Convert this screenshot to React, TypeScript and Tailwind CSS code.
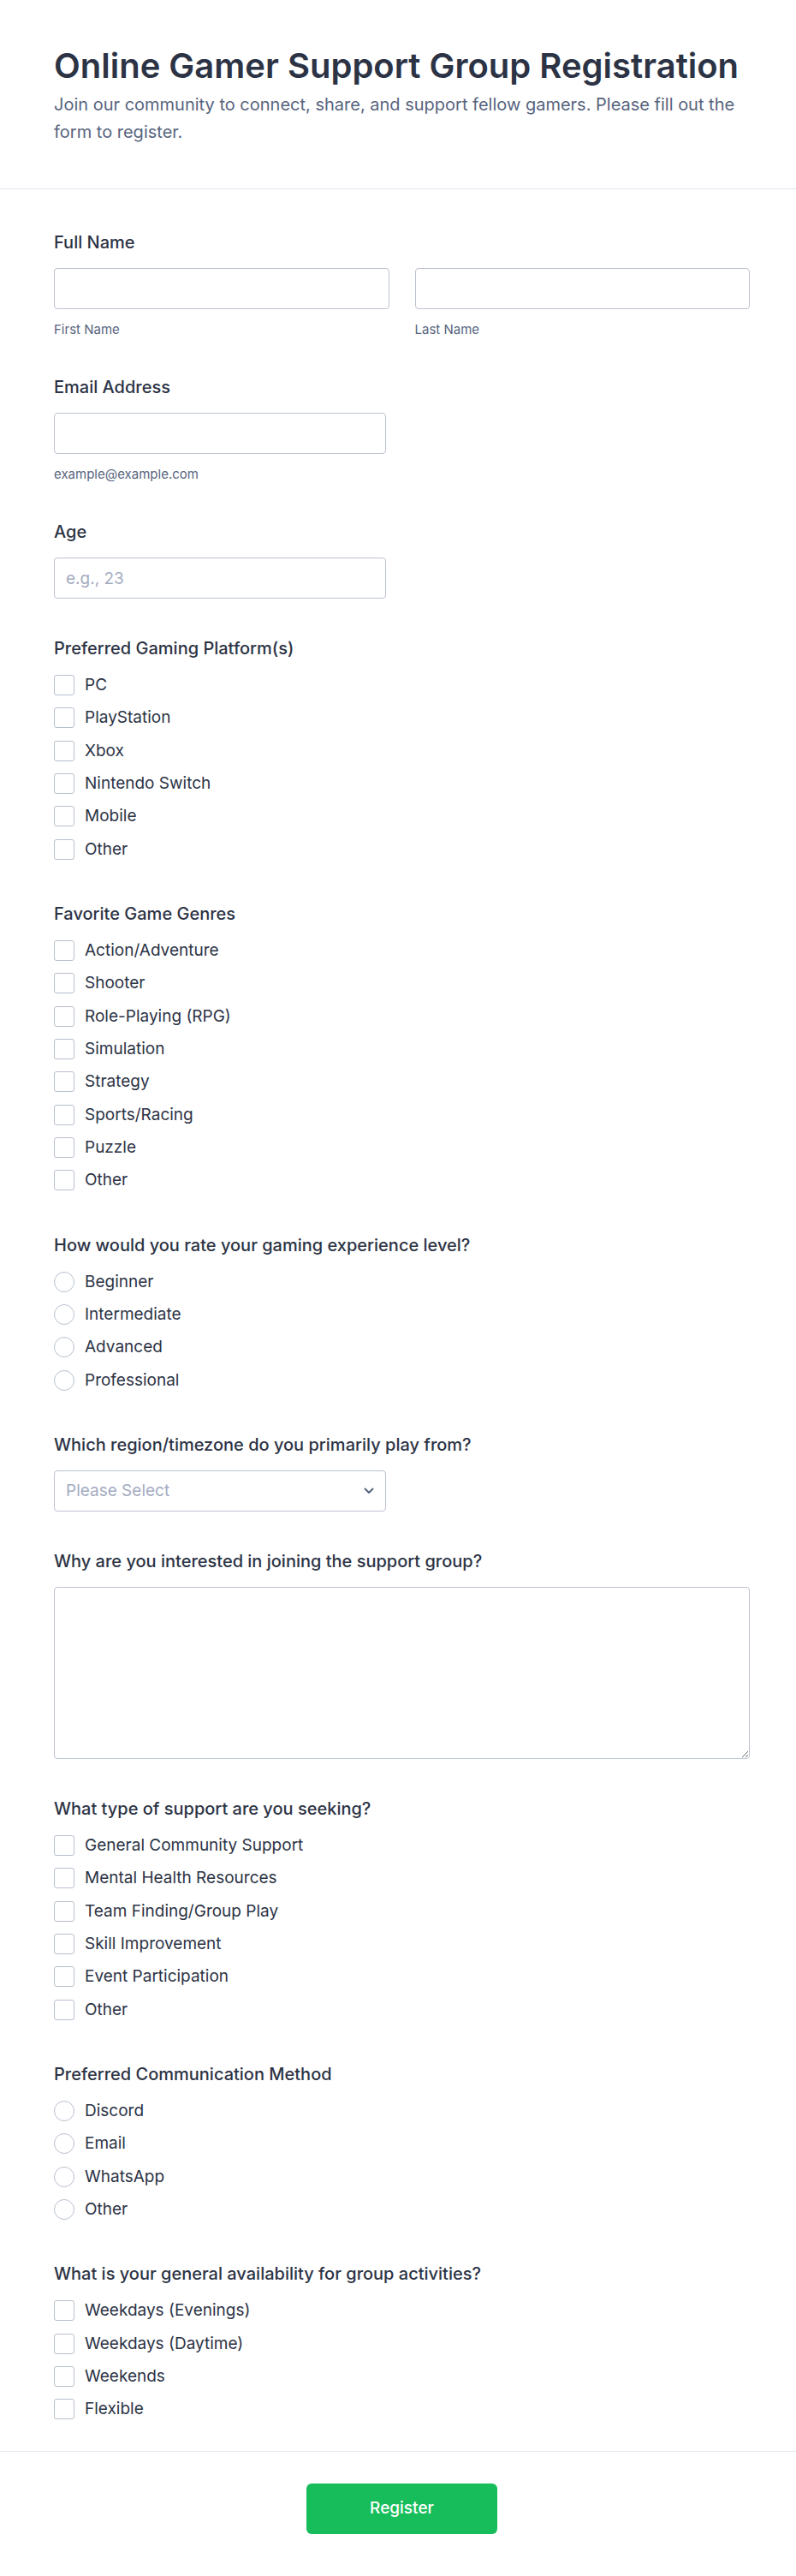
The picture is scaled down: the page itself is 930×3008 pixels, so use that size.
import React from 'react';

const PLATFORMS = ['PC', 'PlayStation', 'Xbox', 'Nintendo Switch', 'Mobile', 'Other'];
const GENRES = [
  'Action/Adventure',
  'Shooter',
  'Role-Playing (RPG)',
  'Simulation',
  'Strategy',
  'Sports/Racing',
  'Puzzle',
  'Other',
];
const LEVELS = ['Beginner', 'Intermediate', 'Advanced', 'Professional'];
const SUPPORT = [
  'General Community Support',
  'Mental Health Resources',
  'Team Finding/Group Play',
  'Skill Improvement',
  'Event Participation',
  'Other',
];
const METHODS = ['Discord', 'Email', 'WhatsApp', 'Other'];
const AVAILABILITY = ['Weekdays (Evenings)', 'Weekdays (Daytime)', 'Weekends', 'Flexible'];

const Label: React.FC<{ children: React.ReactNode }> = ({ children }) => (
  <div className="text-[20px] leading-[28px] font-medium text-[#2c3345]">{children}</div>
);

const TextInput: React.FC<{ placeholder?: string; className?: string }> = ({ placeholder, className = '' }) => (
  <input
    type="text"
    placeholder={placeholder}
    className={`block h-[48px] px-[13px] rounded-[4px] border border-[#bcc2d1] bg-white text-[19px] text-[#2c3345] placeholder:text-[#a3abbf] outline-none ${className}`}
  />
);

const OptionGroup: React.FC<{ name: string; label: string; options: string[]; type: 'checkbox' | 'radio' }> = ({
  name,
  label,
  options,
  type,
}) => (
  <div>
    <Label>{label}</Label>
    <div className="mt-[10px] flex flex-col">
      {options.map((opt) => (
        <label key={opt} className="flex items-center h-[38.33px] cursor-pointer">
          <input
            type={type}
            name={name}
            className={`appearance-none w-6 h-6 shrink-0 border border-[#b8bfce] bg-white ${
              type === 'radio' ? 'rounded-full' : 'rounded-[3px]'
            }`}
          />
          <span className="ml-3 text-[19px] leading-6 text-[#2c3345]">{opt}</span>
        </label>
      ))}
    </div>
  </div>
);

export default function App() {
  return (
    <div className="min-h-screen bg-white font-['Inter','Noto_Sans',sans-serif] text-[#2c3345]">
      {/* Header */}
      <header className="pl-[63px] pr-[54px] pt-[53px] pb-[50px] border-b border-[#e3e6ee]">
        <h1 className="text-[40px] leading-[48px] font-semibold text-[#2c3345]">
          Online Gamer Support Group Registration
        </h1>
        <p className="mt-[5px] text-[20px] leading-[32px] text-[#57647e]">
          Join our community to connect, share, and support fellow gamers. Please fill out the form to register.
        </p>
      </header>

      {/* Form body */}
      <form className="pl-[63px] pr-[54px] pt-[48px] pb-[29px] flex flex-col" onSubmit={(e) => e.preventDefault()}>
        <div>
          <Label>Full Name</Label>
          <div className="mt-4 grid grid-cols-2 gap-[30px]">
            <div>
              <TextInput className="w-full" />
              <div className="mt-[14px] text-[15px] leading-5 text-[#57647e]">First Name</div>
            </div>
            <div>
              <TextInput className="w-full" />
              <div className="mt-[14px] text-[15px] leading-5 text-[#57647e]">Last Name</div>
            </div>
          </div>
        </div>

        <div className="mt-[43px]">
          <Label>Email Address</Label>
          <TextInput className="mt-4 w-[388px]" />
          <div className="mt-[14px] text-[15px] leading-5 text-[#57647e]">example@example.com</div>
        </div>

        <div className="mt-[43px]">
          <Label>Age</Label>
          <TextInput className="mt-4 w-[388px]" placeholder="e.g., 23" />
        </div>

        <div className="mt-[44px]">
          <OptionGroup name="platform" label="Preferred Gaming Platform(s)" options={PLATFORMS} type="checkbox" />
        </div>

        <div className="mt-[42px]">
          <OptionGroup name="genres" label="Favorite Game Genres" options={GENRES} type="checkbox" />
        </div>

        <div className="mt-[42px]">
          <OptionGroup
            name="level"
            label="How would you rate your gaming experience level?"
            options={LEVELS}
            type="radio"
          />
        </div>

        <div className="mt-[42px]">
          <Label>Which region/timezone do you primarily play from?</Label>
          <div className="relative mt-4 w-[388px]">
            <select
              defaultValue=""
              className="block w-full h-[48px] pl-[13px] pr-10 appearance-none rounded-[4px] border border-[#bcc2d1] bg-white text-[19px] text-[#a3abbf] outline-none"
            >
              <option value="" disabled>
                Please Select
              </option>
              <option>North America</option>
              <option>South America</option>
              <option>Europe</option>
              <option>Asia</option>
              <option>Oceania</option>
              <option>Africa</option>
            </select>
            <svg
              className="pointer-events-none absolute right-[14px] top-1/2 -translate-y-1/2"
              width="12"
              height="8"
              viewBox="0 0 12 8"
              fill="none"
            >
              <path d="M1.5 1.5L6 6l4.5-4.5" stroke="#57647e" strokeWidth="2" strokeLinecap="round" strokeLinejoin="round" />
            </svg>
          </div>
        </div>

        <div className="mt-[44px]">
          <Label>Why are you interested in joining the support group?</Label>
          <textarea className="mt-4 block w-full h-[201px] p-[13px] rounded-[4px] border border-[#bcc2d1] bg-white text-[19px] outline-none" />
        </div>

        <div className="mt-[44px]">
          <OptionGroup name="support" label="What type of support are you seeking?" options={SUPPORT} type="checkbox" />
        </div>

        <div className="mt-[42px]">
          <OptionGroup name="method" label="Preferred Communication Method" options={METHODS} type="radio" />
        </div>

        <div className="mt-[42px]">
          <OptionGroup
            name="availability"
            label="What is your general availability for group activities?"
            options={AVAILABILITY}
            type="checkbox"
          />
        </div>
      </form>

      {/* Footer */}
      <div className="pl-[63px] pr-[54px] pt-[37px] pb-[49px] border-t border-[#e3e6ee] flex justify-center">
        <button
          type="submit"
          className="w-[223px] h-[59px] rounded-[6px] bg-[#18bd5b] text-white text-[19px] font-medium"
        >
          Register
        </button>
      </div>
    </div>
  );
}
